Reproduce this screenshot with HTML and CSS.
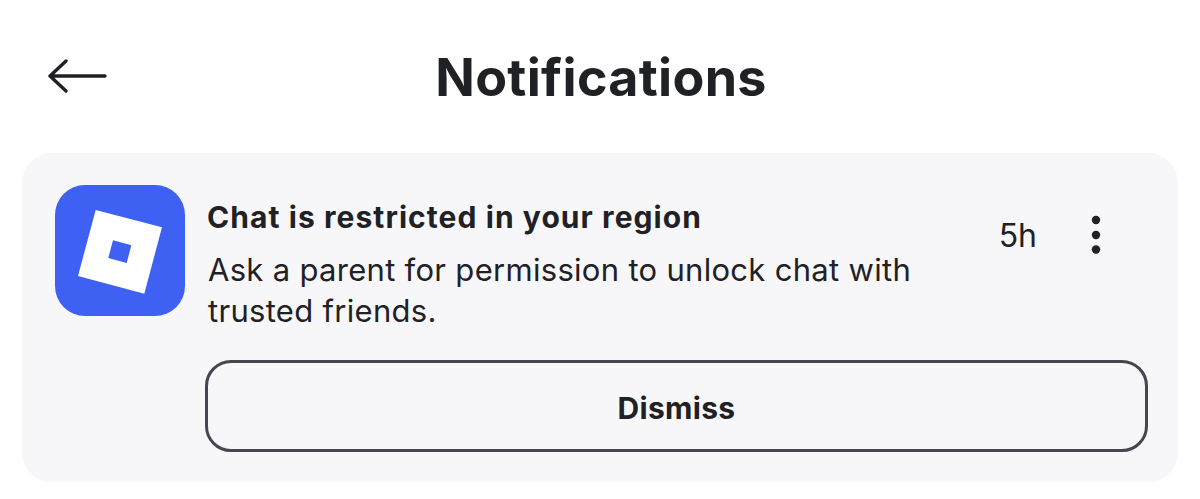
FILE: index.html
```html
<!DOCTYPE html>
<html lang="en">
<head>
  <meta charset="UTF-8">
  <title>Notifications</title>
  <link rel="stylesheet" href="styles.css">
</head>
<body>
  <header class="topbar">
    <button class="back" aria-label="Back">
      <svg width="60" height="34" viewBox="0 0 60 34">
        <path d="M18 2 L2 17 L18 32 M2 17 H57" fill="none" stroke="#1f2124" stroke-width="3.4" stroke-linecap="round" stroke-linejoin="round"/>
      </svg>
    </button>
    <h1 class="title">Notifications</h1>
  </header>

  <section class="card">
    <div class="icon">
      <svg width="130" height="131" viewBox="0 0 130 131">
        <path fill="#fff" fill-rule="evenodd" d="M40.7 25 L107 42.3 L89.3 108.7 L23 91 Z M58 55.3 L53.3 73 L71.7 78 L76.3 60.3 Z"/>
      </svg>
    </div>
    <div class="body">
      <div class="row">
        <div class="text">
          <h2 class="heading">Chat is restricted in your region</h2>
          <p class="message">Ask a parent for permission to unlock chat with trusted friends.</p>
        </div>
        <span class="time">5h</span>
        <svg class="more" width="12" height="42" viewBox="0 0 12 42">
          <circle cx="6" cy="6" r="4.2"/>
          <circle cx="6" cy="21" r="4.2"/>
          <circle cx="6" cy="35.5" r="4.2"/>
        </svg>
      </div>
      <button class="dismiss">Dismiss</button>
    </div>
  </section>
</body>
</html>
```

FILE: styles.css
```css
* {
  box-sizing: border-box;
}
body {
  margin: 0;
  background: #fff;
  color: #1f2124;
  font-family: "Inter", "Noto Sans", sans-serif;
  height: 499px;
  overflow: hidden;
}
.topbar {
  height: 153px;
  display: flex;
  align-items: center;
  justify-content: center;
  position: relative;
}
.back {
  position: absolute;
  left: 48px;
  top: 59px;
  padding: 0;
  border: none;
  background: none;
  display: block;
  line-height: 0;
}
.title {
  margin: 0;
  padding: 2px 0 0 2px;
  font-size: 52px;
  font-weight: 700;
  letter-spacing: 0.3px;
}
.card {
  margin: 0 22px;
  height: 329px;
  background: #f7f7fa;
  border-radius: 30px;
  padding: 32px 30px 30px 33px;
  display: flex;
  gap: 20px;
}
.icon {
  width: 130px;
  height: 131px;
  flex: none;
  background: #3e60f3;
  border-radius: 30px;
  line-height: 0;
}
.body {
  flex: 1;
  display: flex;
  flex-direction: column;
  justify-content: space-between;
}
.row {
  display: flex;
  align-items: flex-start;
}
.text {
  flex: 1;
  padding-top: 15px;
  padding-left: 2px;
}
.heading {
  margin: 0 0 15px;
  font-size: 30px;
  line-height: 34px;
  font-weight: 700;
  letter-spacing: 1.07px;
}
.message {
  margin: 0 0 0 1px;
  width: 720px;
  font-size: 31px;
  line-height: 41px;
  letter-spacing: 0.3px;
}
.time {
  font-size: 32px;
  line-height: 36px;
  margin-top: 33px;
  margin-right: 53px;
}
.more {
  fill: #1f2124;
  margin-top: 29px;
  margin-right: 46px;
}
.dismiss {
  height: 92px;
  width: 943px;
  background: none;
  border: 3px solid #45464f;
  border-radius: 26px;
  color: #1f2124;
  font-family: inherit;
  font-size: 30px;
  font-weight: 700;
  letter-spacing: 0.3px;
  padding-top: 4px;
}
```
